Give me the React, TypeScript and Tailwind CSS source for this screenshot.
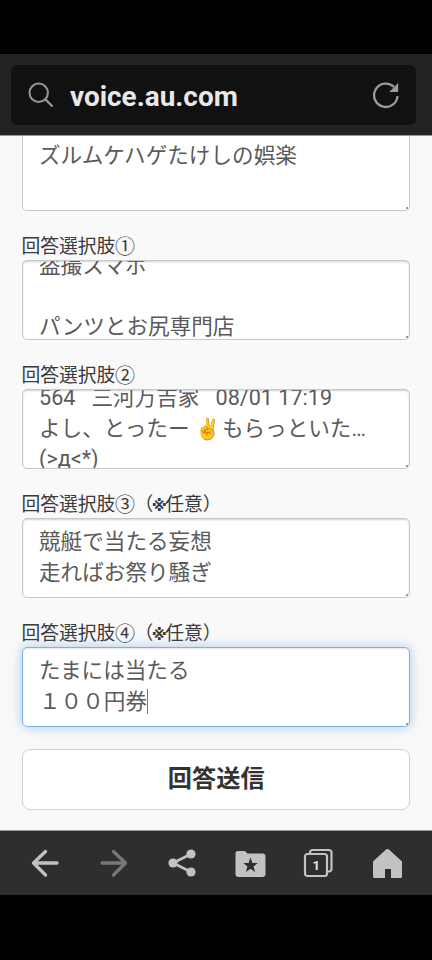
import type { ReactNode } from "react";

function Box({ children, shift, focused = false }: { children: ReactNode; shift: string; focused?: boolean }) {
  const look = focused
    ? "border-[#7db1e8] shadow-[0_0_12px_rgba(82,160,230,0.5),inset_0_1px_2px_rgba(0,0,0,0.1)]"
    : "border-[#c8c8c8] shadow-[inset_0_1px_2px_rgba(0,0,0,0.18)]";
  return (
    <div className={"relative h-20 shrink-0 overflow-hidden rounded-[5px] border-[1.5px] bg-white " + look}>
      <div className={"whitespace-pre pl-[16.5px] text-[21.6px] leading-[30.7px] text-[#5a5a5a] " + shift}>{children}</div>
      <i className="absolute bottom-[1px] right-[1px] size-[2px] rounded-full bg-[#777]" />
    </div>
  );
}

function Label({ number, optional = false }: { number: string; optional?: boolean }) {
  return (
    <div className="flex h-[49px] shrink-0 items-end whitespace-pre text-[18.8px] leading-[25px] text-[#3a3a3a]">
      回答選択肢
      <span className="flex w-[19px] justify-center text-[20px] leading-[25px]">{number}</span>
      {optional && (
        <>
          （<span className="flex w-[12px] justify-center font-['DejaVu_Sans',sans-serif] text-[15.5px] font-bold leading-[24px]">※</span>任意）
        </>
      )}
    </div>
  );
}

export default function App() {
  return (
    <div className="flex h-[960px] w-[432px] flex-col overflow-hidden bg-black font-[Roboto,'Noto_Sans_CJK_JP',sans-serif]">
      <div className="h-[54px] shrink-0" />
      <header className="h-[81px] shrink-0 bg-[#232323] pl-[11px] pr-4 pt-[11px]">
        <div className="flex h-[60px] items-center rounded-[6px] bg-[#111]">
          <svg viewBox="0 0 26 26" className="ml-[17px] size-[26px]" fill="none" stroke="#969696" strokeWidth="2">
            <circle cx="10.7" cy="10.7" r="9.2" />
            <path d="m17.4 17.4 7.1 7.1" strokeWidth="2.4" />
          </svg>
          <span className="ml-4 pt-[3px] text-[27.9px] font-bold leading-none text-[#e8e8e8]">voice.au.com</span>
          <svg viewBox="0 0 28 28" className="ml-auto mr-[16px] size-7">
            <path d="M21.9 5.8A11.7 11.7 0 1 0 25.5 15" fill="none" stroke="#9a9a9a" strokeWidth="2.3" />
            <path d="M26.2 2v9h-9Z" fill="#9a9a9a" />
          </svg>
        </div>
      </header>
      <main className="flex h-[696px] shrink-0 flex-col overflow-hidden border-y border-[#999] bg-[#f9f9f9] pl-[21.5px] pr-[22px]">
        <div className="relative h-[75px] shrink-0 rounded-b-[5px] border-[1.5px] border-t-0 border-[#c8c8c8] bg-white pl-[16.5px] pt-[5px] text-[21.6px] leading-[30.7px] text-[#5a5a5a]">
          ズルムケハゲたけしの娯楽
          <i className="absolute bottom-[1px] right-[1px] size-[2px] rounded-full bg-[#777]" />
        </div>
        <Label number="①" />
        <Box shift="-mt-[10.5px]">{"盗撮スマホ\n\nパンツとお尻専門店"}</Box>
        <Label number="②" />
        <Box shift="-mt-[7px]">
          {"564   三河万吉家   08/01 17:19\nよし、とったー "}
          <span className="inline-block w-[27px] font-['Noto_Color_Emoji',sans-serif] text-[20.5px] leading-none">✌️</span>
          {"もらっといた…\n(>д<*)"}
        </Box>
        <Label number="③" optional />
        <Box shift="mt-[8px]">{"競艇で当たる妄想\n走ればお祭り騒ぎ"}</Box>
        <Label number="④" optional />
        <Box shift="mt-[8px]" focused>
          {"たまには当たる\n１００円券"}
          <i className="inline-block h-[25px] w-px bg-[#777] align-[-5px]" />
        </Box>
        <button className="mt-[22px] h-[61px] shrink-0 rounded-[8px] border-[1.5px] border-[#d0d0d0] bg-white pl-px text-[24.2px] font-bold leading-none text-[#333]">回答送信</button>
      </main>
      <nav className="flex h-[64px] shrink-0 items-center gap-[36.6px] bg-[#2e2e2e] pl-[29px] text-[#c2c2c2]">
        <svg viewBox="0 0 32 32" className="size-8" fill="none" stroke="currentColor" strokeWidth="3.3" strokeLinecap="round" strokeLinejoin="round">
          <path d="M28 16H4.500M16.500 4.500 4.500 16l12 12" />
        </svg>
        <svg viewBox="0 0 32 32" className="size-8 text-[#777]" fill="none" stroke="currentColor" strokeWidth="3.3" strokeLinecap="round" strokeLinejoin="round">
          <path d="M4 16h23.500M15.500 4.500l12 11.500-12 12" />
        </svg>
        <svg viewBox="0 0 32 32" className="size-8" fill="currentColor">
          <path d="M25 7 7 16l18 9" fill="none" stroke="currentColor" strokeWidth="2.6" />
          <circle cx="25" cy="7" r="4.600" /><circle cx="7" cy="16" r="4.600" /><circle cx="25" cy="25" r="4.600" />
        </svg>
        <svg viewBox="0 0 32 32" className="size-8">
          <path d="M3 4h7L12.500 6.500h15a3 3 0 0 1 3 3V27a3 3 0 0 1-3 3H3.500a3 3 0 0 1-3-3V6.500A2.500 2.500 0 0 1 3 4Z" fill="currentColor" />
          <path d="m15.500 10.500 1.900 5.500h5.400l-4.300 3.400 1.600 5.600-4.600-3.300-4.600 3.300 1.600-5.600-4.300-3.400h5.400Z" fill="#2e2e2e" />
        </svg>
        <div className="relative size-8">
          <svg viewBox="0 0 32 32" className="size-8" fill="none" stroke="currentColor" strokeWidth="2.2">
            <rect x="2" y="7" width="22" height="22" rx="2.5" />
            <path d="M7 7V5.500A2.500 2.500 0 0 1 9.500 3H26a2.500 2.500 0 0 1 2.500 2.500V22a2.500 2.500 0 0 1-2.500 2.500h-2" />
          </svg>
          <span className="absolute left-[9px] top-[12px] text-[13px] font-bold leading-[14px] text-[#e5e5e5]">1</span>
        </div>
        <svg viewBox="0 0 32 32" className="size-8" fill="currentColor">
          <path d="M17.500 3 30 14.500v15a1.500 1.500 0 0 1-1.500 1.500H19v-9h-6v9H2.500A1.500 1.500 0 0 1 1 29.500v-15L13.500 3a2.800 2.800 0 0 1 4 0Z" />
        </svg>
      </nav>
    </div>
  );
}
